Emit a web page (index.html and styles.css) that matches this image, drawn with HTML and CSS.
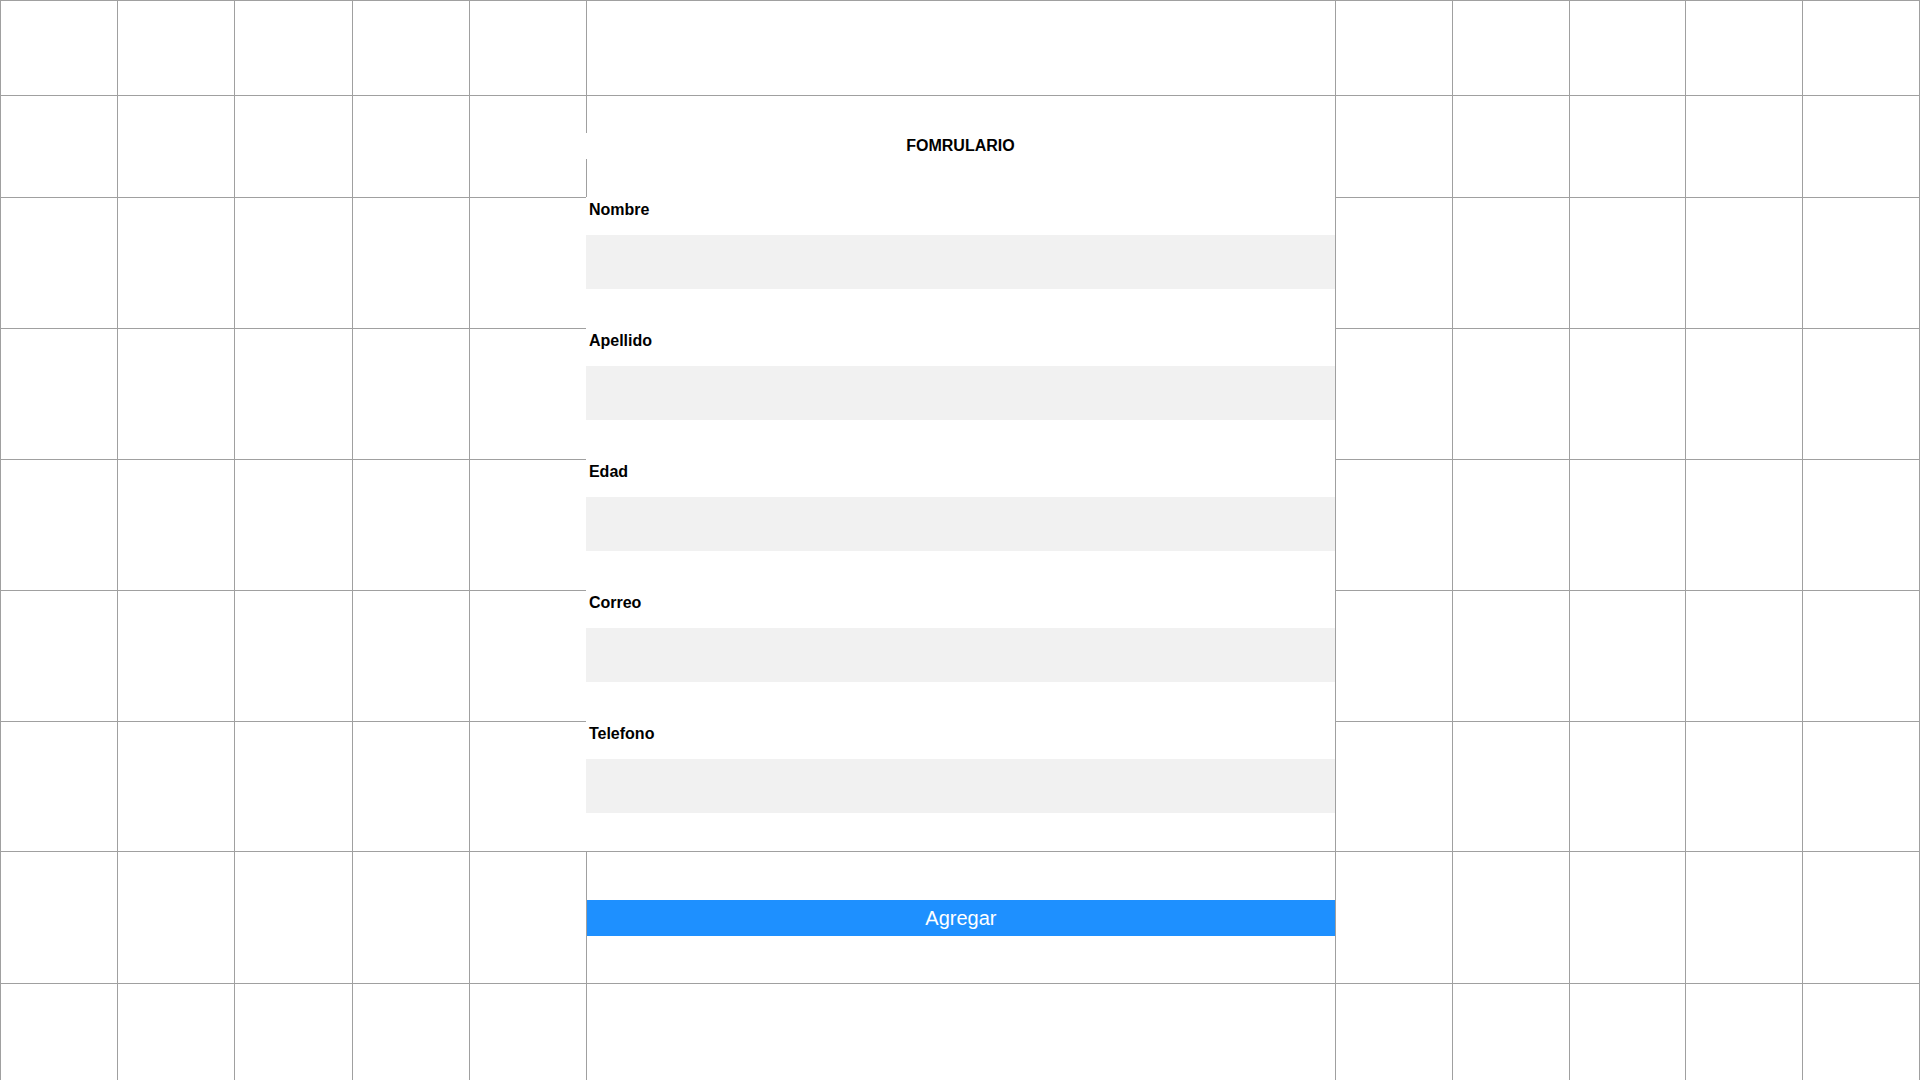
FILE: index.html
```html
<!DOCTYPE html>
<html lang="es">
<head>
<meta charset="utf-8">
<title>Formulario</title>
<link rel="stylesheet" href="styles.css">
</head>
<body>
<div class="board">
  <div class="cell"></div><div class="cell"></div><div class="cell"></div><div class="cell"></div><div class="cell"></div><div class="cell"></div><div class="cell"></div><div class="cell"></div><div class="cell"></div><div class="cell"></div><div class="cell"></div>

  <div class="cell"></div><div class="cell"></div><div class="cell"></div><div class="cell"></div><div class="cell"></div>
  <form class="form">
    <div class="form-head"><h1 class="form-title">FOMRULARIO</h1></div>
    <div class="field"><label class="field-label" for="nombre">Nombre</label><input class="field-input" id="nombre" type="text"></div>
    <div class="field"><label class="field-label" for="apellido">Apellido</label><input class="field-input" id="apellido" type="text"></div>
    <div class="field"><label class="field-label" for="edad">Edad</label><input class="field-input" id="edad" type="text"></div>
    <div class="field"><label class="field-label" for="correo">Correo</label><input class="field-input" id="correo" type="text"></div>
    <div class="field"><label class="field-label" for="telefono">Telefono</label><input class="field-input" id="telefono" type="text"></div>
    <div class="form-actions"><button class="btn" type="button">Agregar</button></div>
  </form>
  <div class="cell"></div><div class="cell"></div><div class="cell"></div><div class="cell"></div><div class="cell"></div>

  <div class="cell"></div><div class="cell"></div><div class="cell"></div><div class="cell"></div><div class="cell"></div><div class="cell"></div><div class="cell"></div><div class="cell"></div><div class="cell"></div><div class="cell"></div>
  <div class="cell"></div><div class="cell"></div><div class="cell"></div><div class="cell"></div><div class="cell"></div><div class="cell"></div><div class="cell"></div><div class="cell"></div><div class="cell"></div><div class="cell"></div>
  <div class="cell"></div><div class="cell"></div><div class="cell"></div><div class="cell"></div><div class="cell"></div><div class="cell"></div><div class="cell"></div><div class="cell"></div><div class="cell"></div><div class="cell"></div>
  <div class="cell"></div><div class="cell"></div><div class="cell"></div><div class="cell"></div><div class="cell"></div><div class="cell"></div><div class="cell"></div><div class="cell"></div><div class="cell"></div><div class="cell"></div>
  <div class="cell"></div><div class="cell"></div><div class="cell"></div><div class="cell"></div><div class="cell"></div><div class="cell"></div><div class="cell"></div><div class="cell"></div><div class="cell"></div><div class="cell"></div>
  <div class="cell"></div><div class="cell"></div><div class="cell"></div><div class="cell"></div><div class="cell"></div><div class="cell"></div><div class="cell"></div><div class="cell"></div><div class="cell"></div><div class="cell"></div>

  <div class="cell"></div><div class="cell"></div><div class="cell"></div><div class="cell"></div><div class="cell"></div><div class="cell"></div><div class="cell"></div><div class="cell"></div><div class="cell"></div><div class="cell"></div><div class="cell"></div>
</div>
</body>
</html>
```

FILE: styles.css
```css
html, body {
  margin: 0;
  padding: 0;
  overflow: hidden;
  background: #ffffff;
}

body {
  font-family: "Liberation Sans", Arial, sans-serif;
  color: #000000;
}

.board {
  box-sizing: border-box;
  width: 1920px;
  display: grid;
  grid-template-columns: repeat(5, 117.2px) 749px repeat(5, 1fr);
  grid-template-rows: 95px 102px 131px 131px 131px 131px 130px 132px 140px;
  border-right: 1px solid #a0a0a0;
}

.cell {
  border-top: 1px solid #a0a0a0;
  border-left: 1px solid #a0a0a0;
}

.form {
  grid-column: 6;
  grid-row: 2 / span 7;
  display: flex;
  flex-direction: column;
  margin: 0;
  background: #ffffff;
}

.form-head {
  box-sizing: border-box;
  height: 102px;
  border-top: 1px solid #a0a0a0;
  border-left: 1px solid #a0a0a0;
  display: flex;
  align-items: center;
}

.form-title {
  flex: 1;
  margin: -2px 0 0 -1px;
  height: 26px;
  line-height: 26px;
  background: #ffffff;
  text-align: center;
  font-size: 16px;
  font-weight: bold;
}

.field {
  box-sizing: border-box;
  height: 131px;
  padding-top: 4px;
  display: flex;
  flex-direction: column;
}

.field:nth-child(6) {
  height: 130px;
}

.field-label {
  display: block;
  height: 18px;
  line-height: 18px;
  padding-left: 3px;
  margin-bottom: 16px;
  font-size: 16px;
  font-weight: bold;
}

.field-input {
  box-sizing: border-box;
  display: block;
  width: 100%;
  height: 54px;
  margin: 0;
  border: none;
  background: #f1f1f1;
  font-family: inherit;
  font-size: 16px;
}

.form-actions {
  box-sizing: border-box;
  height: 132px;
  border-top: 1px solid #a0a0a0;
  border-left: 1px solid #a0a0a0;
  display: flex;
  align-items: center;
}

.btn {
  width: 100%;
  height: 36px;
  margin: 0;
  padding: 0;
  border: none;
  background: #1e90ff;
  color: #ffffff;
  font-family: "Liberation Sans", Arial, sans-serif;
  font-size: 20px;
  line-height: 36px;
}
```
